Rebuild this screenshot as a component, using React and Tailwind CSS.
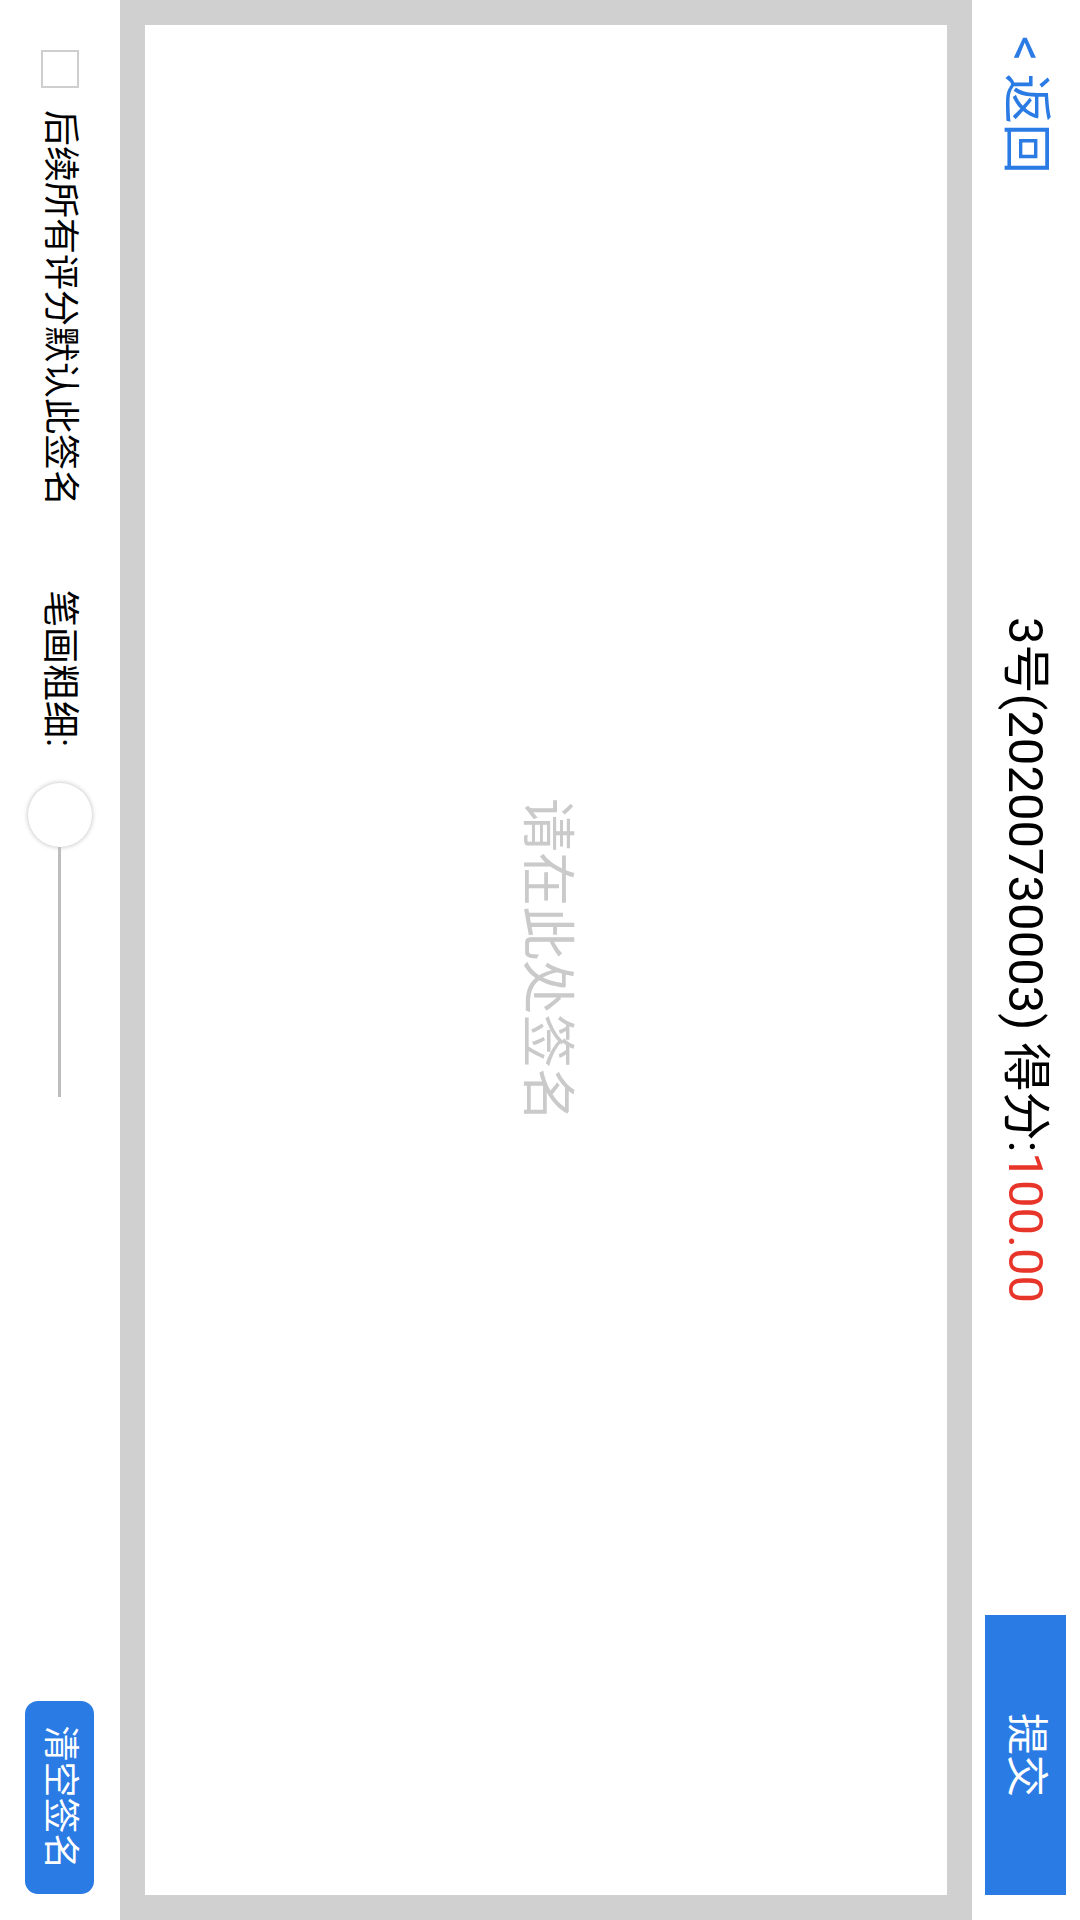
import React from 'react';

const font = "font-['Roboto','Noto_Sans_CJK_SC',sans-serif]";

const Header = () => (
  <header className="h-[108px] grid grid-cols-[1fr_auto_1fr] items-center">
    <div className="pl-[36px]">
      <button className="text-[50px] leading-none text-[#2b7be4]">&lt; 返回</button>
    </div>
    <h1 className="text-[49px] leading-none text-black whitespace-nowrap">
      3号(20200730003) 得分:<span className="text-[#e8352a]">100.00</span>
    </h1>
    <div className="flex justify-end pr-[25px]">
      <button className="w-[280px] h-[81px] bg-[#2b7be4] text-white text-[42px] leading-none">提交</button>
    </div>
  </header>
);

const SignPad = () => (
  <section className="h-[852px] bg-[#d0d0d0] p-[25px]">
    <div className="h-full bg-white flex items-center justify-center">
      <span className="text-[54px] leading-none text-[#cacaca]">请在此处签名</span>
    </div>
  </section>
);

const Toolbar = () => (
  <footer className="h-[120px] flex items-center pl-[50px] pr-[26px]">
    {/* checkbox */}
    <span className="w-[38px] h-[38px] border-2 border-[#cfcfcf] bg-white" />
    <span className="ml-[22px] text-[36px] leading-none text-black">后续所有评分默认此签名</span>

    <span className="ml-[84px] text-[37px] leading-none text-black">笔画粗细:</span>
    {/* stroke width slider */}
    <div className="ml-[36px] w-[314px] h-[66px] flex items-center">
      <span className="w-[64px] h-[64px] shrink-0 rounded-full bg-white shadow-[0_0_5px_rgba(0,0,0,0.28)]" />
      <span className="flex-1 h-[3px] bg-[#bdbdbd]" />
    </div>

    <div className="flex-1" />
    <button className="w-[193px] h-[69px] rounded-[13px] bg-[#2b7be4] text-white text-[36px] leading-none">
      清空签名
    </button>
  </footer>
);

const App = () => {
  return (
    <div className={`w-[1080px] h-[1920px] overflow-hidden bg-white ${font}`}>
      <div className="w-[1920px] h-[1080px] origin-top-left translate-x-[1080px] rotate-90 flex flex-col bg-white">
        <Header />
        <SignPad />
        <Toolbar />
      </div>
    </div>
  );
};

export default App;
